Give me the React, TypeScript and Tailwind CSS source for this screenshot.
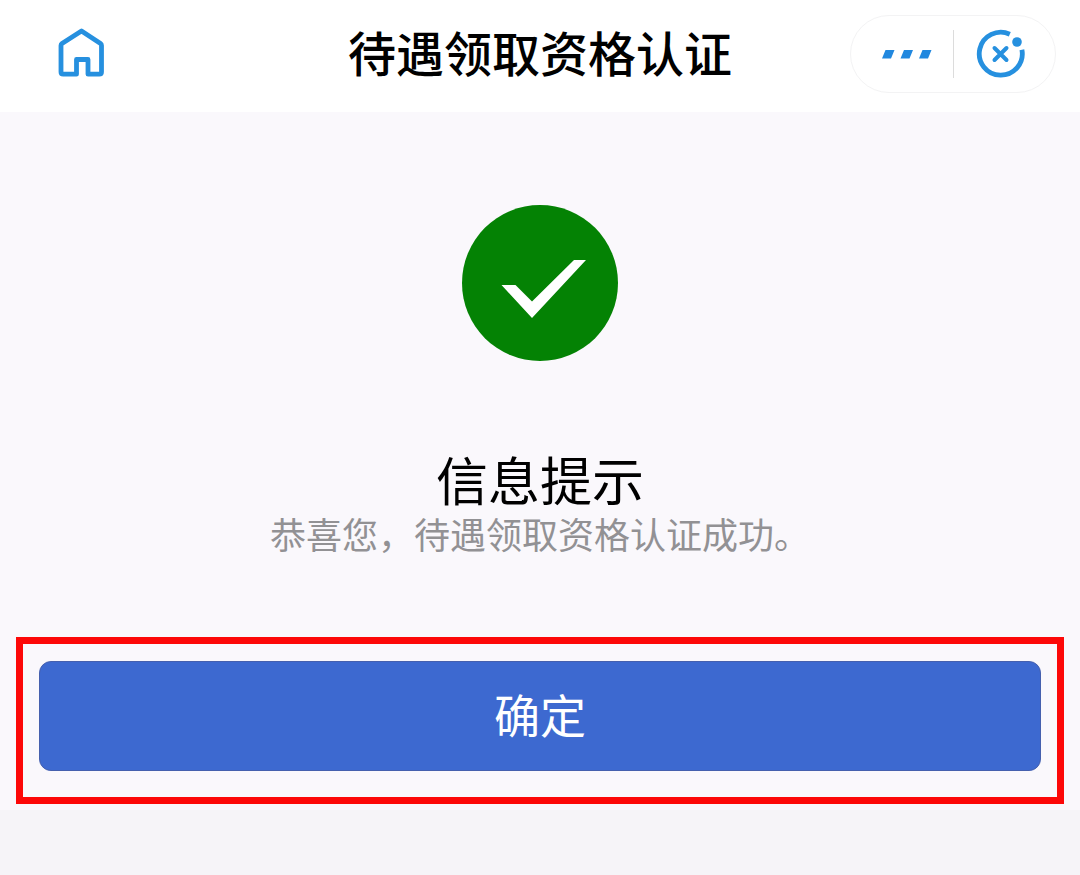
import type { ReactNode } from "react";

const TITLE = "待遇领取资格认证";

export default function App() {
  return (
    <div className="flex min-h-screen flex-col bg-[#f6f4f8] font-['Noto_Sans_CJK_SC',sans-serif] text-black">
      <Header />
      <main className="flex flex-col items-center bg-[#faf8fc] px-4 pt-[93px] pb-1.5">
        <SuccessMark />
        <h2 className="mt-[88px] text-[52px] leading-[60px]">信息提示</h2>
        <p className="text-[36px] leading-[48px] text-[#929194]">
          恭喜您，待遇领取资格认证成功。
        </p>
        <div className="mt-20 w-full border-[7px] border-[#fd0808] px-4 pt-[17px] pb-[26px]">
          <button
            type="button"
            className="block h-[110px] w-full rounded-xl border border-[#4560ae] bg-[#3d69d0] pb-1.5 text-[46px] leading-[48px] text-white"
          >
            确定
          </button>
        </div>
      </main>
    </div>
  );
}

function Header() {
  return (
    <header className="grid h-28 grid-cols-[1fr_auto_1fr] items-start bg-white px-6 pt-[15px]">
      <IconButton label="首页" className="mt-3 ml-8 size-[50px]">
        <svg viewBox="0 0 50 50" className="size-full" aria-hidden="true">
          <path
            d="M25.500 4 L44.500 16.500 Q45.500 17.200 45.500 18.500 V45 Q45.500 47.200 43.300 47.200 H32 V32.500 H20.500 V47.200 H7.200 Q5 47.200 5 45 V18.500 Q5 17.200 6 16.500 Z"
            fill="none"
            stroke="#2690df"
            strokeWidth="4.800"
            strokeLinejoin="round"
          />
        </svg>
      </IconButton>
      <h1 className="text-[48px] leading-[72px] font-medium">{TITLE}</h1>
      <div className="flex h-[78px] w-[206px] items-center justify-self-end rounded-full border border-[#f3f3f4]">
        <IconButton label="更多" className="ml-[30px] h-12 w-[52px]">
          <svg viewBox="0 0 52 48" className="size-full" aria-hidden="true">
            <path
              d="M4.500 20 h9 l-3.500 8.500 H1 Z M23 20 h9 l-3.500 8.500 H19.500 Z M41.500 20 h9 l-3.500 8.500 H38 Z"
              fill="#2188df"
            />
          </svg>
        </IconButton>
        <span className="ml-5 h-12 w-px bg-[#dcdcdc]" />
        <IconButton label="关闭" className="ml-[22px] size-[50px]">
          <svg viewBox="0 0 50 50" className="size-full" aria-hidden="true">
            <path
              d="M33.800 5.200 A21.500 21.500 0 1 0 45.900 20.700"
              fill="none"
              stroke="#2690df"
              strokeWidth="4.800"
            />
            <circle cx="41" cy="13" r="4.800" fill="#2690df" />
            <path
              d="M18.500 19 L30.500 31 M30.500 19 L18.500 31"
              stroke="#2690df"
              strokeWidth="4"
              strokeLinecap="round"
            />
          </svg>
        </IconButton>
      </div>
    </header>
  );
}

function IconButton({
  label,
  className,
  children,
}: {
  label: string;
  className: string;
  children: ReactNode;
}) {
  return (
    <button type="button" aria-label={label} className={className}>
      {children}
    </button>
  );
}

function SuccessMark() {
  return (
    <svg viewBox="0 0 156 156" className="size-[156px]" aria-hidden="true">
      <circle cx="78" cy="78" r="78" fill="#048204" />
      <path
        d="M39.500 80 H53.500 L70 96.500 L112 55 H124 L70 113 Z"
        fill="#fff"
      />
    </svg>
  );
}
